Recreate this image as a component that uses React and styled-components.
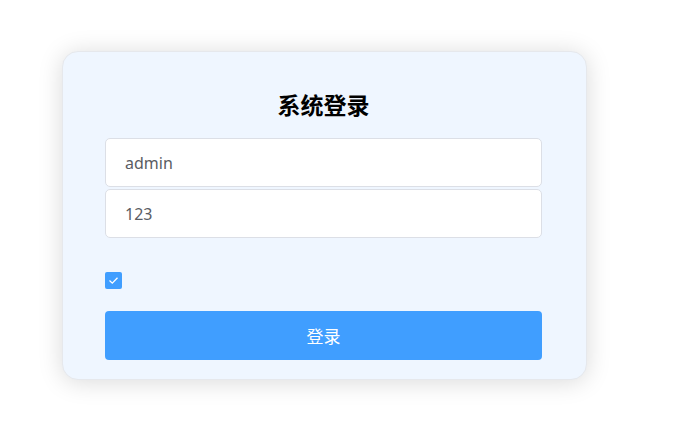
import React, { useState } from "react";
import styled, { createGlobalStyle } from "styled-components";

const Global = createGlobalStyle`
  html, body {
    margin: 0;
    padding: 0;
    background: #ffffff;
    font-family: "Noto Sans", "Noto Sans CJK SC", sans-serif;
  }
`;

const Page = styled.div`
  width: 683px;
  height: 442px;
  padding: 51px 0 0 62px;
  box-sizing: border-box;
`;

const Card = styled.form`
  width: 525px;
  box-sizing: border-box;
  padding: 33px 44px 19px 42px;
  background: #eff6ff;
  border: 1px solid #e6e8ec;
  border-radius: 16px;
  box-shadow: 0 2px 25px rgba(0, 0, 0, 0.15);
  display: flex;
  flex-direction: column;
`;

const Title = styled.h3`
  margin: 0 0 13px;
  text-align: center;
  font-size: 23px;
  font-weight: 700;
  color: #000;
  line-height: 40px;
`;

const Field = styled.input`
  display: block;
  width: 100%;
  height: 49px;
  box-sizing: border-box;
  margin-bottom: ${(p) => p.$gap || 2}px;
  padding: 0 19px;
  border: 1px solid #dcdfe6;
  border-radius: 5px;
  background: #fff;
  color: #5a5c63;
  font-family: "Noto Sans", "Noto Sans CJK SC", sans-serif;
  font-size: 16px;
  outline: none;
`;

const Remember = styled.label`
  display: flex;
  align-items: center;
  height: 17px;
  margin: 32px 0 22px;
`;

const Box = styled.span`
  width: 17px;
  height: 17px;
  border-radius: 2px;
  background: #409eff;
  display: flex;
  align-items: center;
  justify-content: center;
`;

const Submit = styled.button`
  width: 100%;
  height: 49px;
  border: none;
  border-radius: 4px;
  background: #409eff;
  color: #fff;
  font-family: "Noto Sans CJK SC", sans-serif;
  font-size: 17px;
  cursor: pointer;
`;

export default function App() {
  const [user, setUser] = useState("admin");
  const [pwd, setPwd] = useState("123");
  return (
    <Page>
      <Global />
      <Card onSubmit={(e) => e.preventDefault()}>
        <Title>系统登录</Title>
        <Field value={user} onChange={(e) => setUser(e.target.value)} />
        <Field value={pwd} onChange={(e) => setPwd(e.target.value)} $gap={0} />
        <Remember>
          <Box>
            <svg width="11" height="9" viewBox="0 0 11 9">
              <path d="M1.5 4.5 L4.3 7.2 L9.5 1.8" fill="none" stroke="#fff" strokeWidth="1.3" />
            </svg>
          </Box>
        </Remember>
        <Submit type="submit">登录</Submit>
      </Card>
    </Page>
  );
}
